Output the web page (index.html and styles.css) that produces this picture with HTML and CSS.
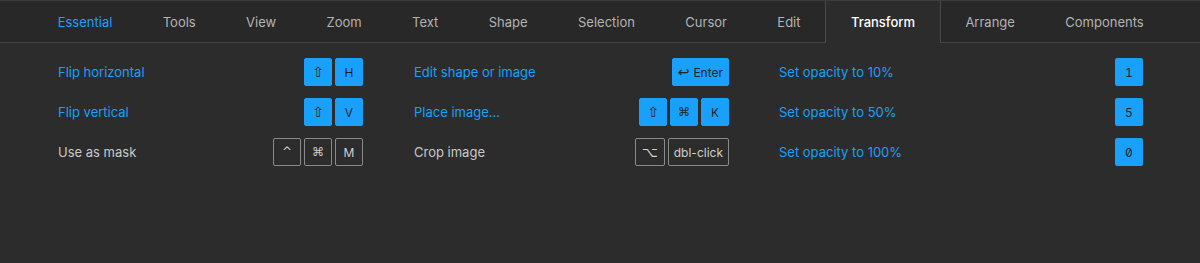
FILE: index.html
```html
<!DOCTYPE html>
<html lang="en">
<head>
    <meta charset="UTF-8">
    <meta name="viewport" content="width=device-width, initial-scale=1.0">
    <title>Keyboard shortcuts</title>
    <link rel="stylesheet" href="styles.css">
</head>
<body>
    <nav class="tabs">
        <div class="tab tab-blue">Essential</div>
        <div class="tab">Tools</div>
        <div class="tab">View</div>
        <div class="tab">Zoom</div>
        <div class="tab">Text</div>
        <div class="tab">Shape</div>
        <div class="tab">Selection</div>
        <div class="tab">Cursor</div>
        <div class="tab">Edit</div>
        <div class="tab active">Transform</div>
        <div class="tab">Arrange</div>
        <div class="tab">Components</div>
    </nav>

    <div class="shortcuts">
        <div class="column col-1">
            <div class="row learned">
                <span class="label">Flip horizontal</span>
                <span class="keys"><kbd class="sym">⇧</kbd><kbd>H</kbd></span>
            </div>
            <div class="row learned">
                <span class="label">Flip vertical</span>
                <span class="keys"><kbd class="sym">⇧</kbd><kbd>V</kbd></span>
            </div>
            <div class="row">
                <span class="label">Use as mask</span>
                <span class="keys"><kbd class="sym small">^</kbd><kbd class="sym small">⌘</kbd><kbd>M</kbd></span>
            </div>
        </div>
        <div class="column col-2">
            <div class="row learned">
                <span class="label">Edit shape or image</span>
                <span class="keys"><kbd class="wide"><span class="sym">↩</span><span>Enter</span></kbd></span>
            </div>
            <div class="row learned">
                <span class="label">Place image...</span>
                <span class="keys"><kbd class="sym">⇧</kbd><kbd class="sym small">⌘</kbd><kbd>K</kbd></span>
            </div>
            <div class="row">
                <span class="label">Crop image</span>
                <span class="keys"><kbd class="sym">⌥</kbd><kbd class="wide">dbl-click</kbd></span>
            </div>
        </div>
        <div class="column col-3">
            <div class="row learned">
                <span class="label">Set opacity to 10%</span>
                <span class="keys"><kbd class="num">1</kbd></span>
            </div>
            <div class="row learned">
                <span class="label">Set opacity to 50%</span>
                <span class="keys"><kbd class="num">5</kbd></span>
            </div>
            <div class="row learned">
                <span class="label">Set opacity to 100%</span>
                <span class="keys"><kbd class="num">0</kbd></span>
            </div>
        </div>
    </div>
</body>
</html>
```

FILE: styles.css
```css
/* Base */
body {
    margin: 0;
    background: #2c2c2c;
    font-family: 'Inter', 'Noto Sans', sans-serif;
    font-size: 13px;
    color: #c8c8c8;
    height: 100vh;
    overflow: hidden;
}

/* Tab bar */
.tabs {
    display: flex;
    height: 41px;
    padding-left: 32px;
    background: #282828;
    border-top: 1px solid #3c3c3c;
    border-bottom: 1px solid #444;
}
.tab {
    display: flex;
    align-items: center;
    padding: 0 24.7px;
    margin-right: -1px;
    border-left: 1px solid transparent;
    border-right: 1px solid transparent;
    color: #b3b3b3;
}
.tab-blue {
    color: #18a0fb;
}
.tab.active {
    color: #fff;
    font-weight: 500;
    background: #2c2c2c;
    border-color: #4a4a4a;
    margin-bottom: -1px;
}

/* Shortcut grid */
.shortcuts {
    display: grid;
    grid-template-columns: 305px 316px 364px;
    column-gap: 50px;
    padding: 15px 0 0 58px;
}
.col-2 {
    padding-left: 1px;
}
.column {
    display: flex;
    flex-direction: column;
    gap: 12px;
}
.row {
    display: flex;
    justify-content: space-between;
    align-items: center;
    height: 28px;
}
.row.learned .label {
    color: #18a0fb;
}
.keys {
    display: flex;
    gap: 3px;
}
kbd {
    display: flex;
    align-items: center;
    justify-content: center;
    gap: 4px;
    box-sizing: border-box;
    min-width: 28px;
    height: 28px;
    padding: 0 6px;
    border: 1px solid #8a8a8a;
    border-radius: 2px;
    font-family: 'Inter', 'Noto Sans', sans-serif;
    font-size: 12px;
    color: #cfcfcf;
}
kbd.sym, .sym {
    font-family: 'DejaVu Sans', sans-serif;
    font-size: 14px;
}
kbd.small {
    font-size: 12px;
}
kbd.wide {
    padding: 0 5px;
}
kbd.num {
    font-feature-settings: "tnum", "zero";
}
.row.learned kbd {
    background: #18a0fb;
    border-color: #18a0fb;
    color: #222;
}
```
